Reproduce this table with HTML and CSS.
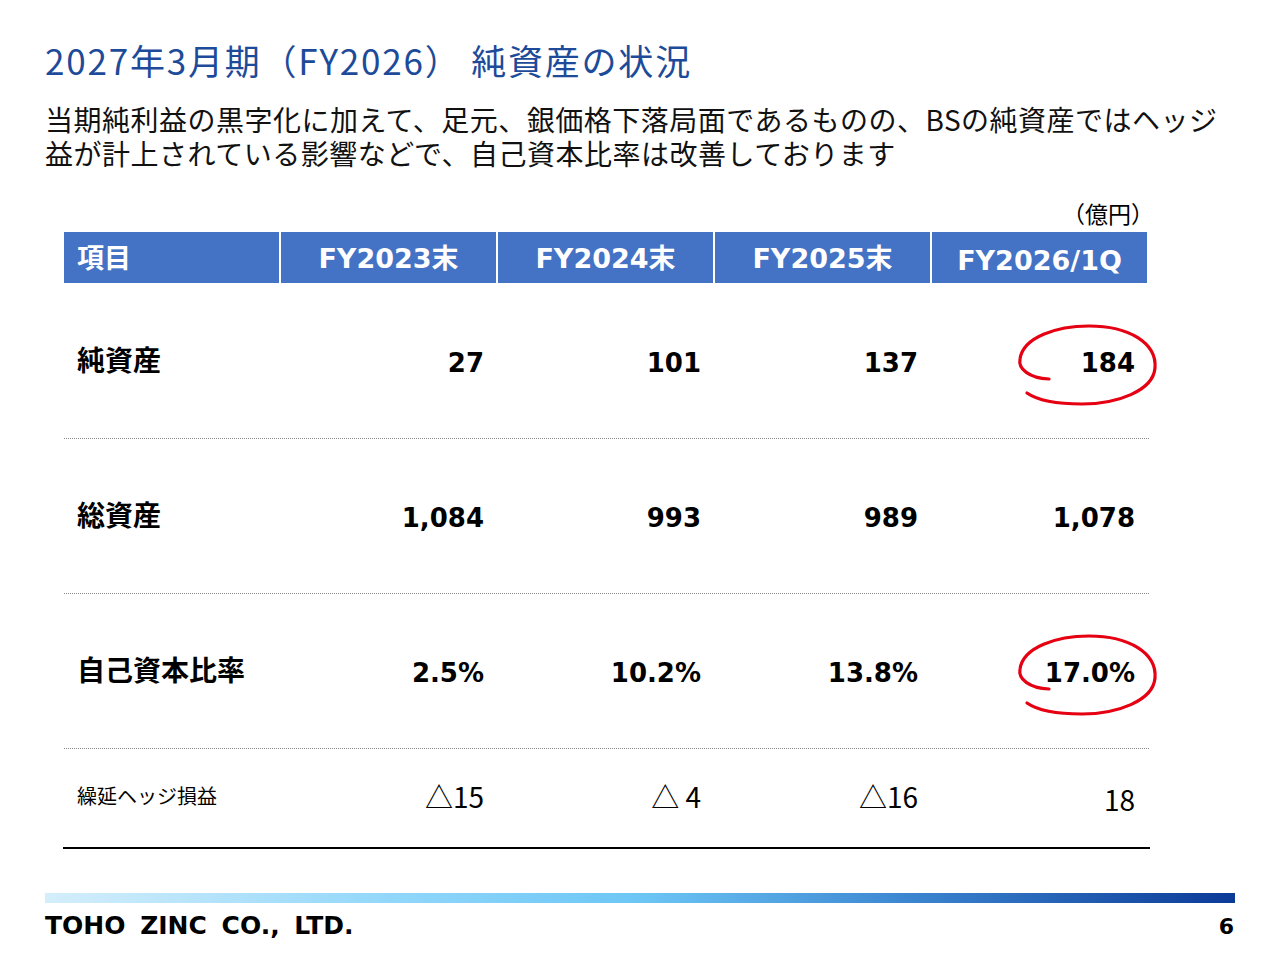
FILE: index.html
```html
<!DOCTYPE html>
<html lang="ja">
<head>
<meta charset="utf-8">
<title>純資産の状況</title>
<link rel="stylesheet" href="styles.css">
</head>
<body>
<div class="slide">
  <h1 class="title">2027年3月期（FY2026） 純資産の状況</h1>
  <div class="lead">
    <span class="line">当期純利益の黒字化に加えて、足元、銀価格下落局面であるものの、BSの純資産ではヘッジ</span>
    <span class="line">益が計上されている影響などで、自己資本比率は改善しております</span>
  </div>
  <div class="unit">（億円）</div>
  <div class="table">
    <div class="head">
      <div class="hcell hlabel">項目</div>
      <div class="hcell">FY2023末</div>
      <div class="hcell">FY2024末</div>
      <div class="hcell">FY2025末</div>
      <div class="hcell hlast">FY2026/1Q</div>
    </div>
    <div class="row big first dotted">
      <div class="label">純資産</div>
      <div class="num">27</div>
      <div class="num">101</div>
      <div class="num">137</div>
      <div class="num mark">184
        <svg class="circle" viewBox="0 0 150 90" width="150" height="90"><path d="M40,56 C20,55 9,46 11,36 C14,14 48,3 80,3 C120,3 148,20 146,45 C144,68 108,81 73,81 C48,81 28,77 18,70" fill="none" stroke="#e50012" stroke-width="3.2" stroke-linecap="round"/></svg>
      </div>
    </div>
    <div class="row big dotted">
      <div class="label">総資産</div>
      <div class="num">1,084</div>
      <div class="num">993</div>
      <div class="num">989</div>
      <div class="num">1,078</div>
    </div>
    <div class="row big dotted">
      <div class="label">自己資本比率</div>
      <div class="num">2.5%</div>
      <div class="num">10.2%</div>
      <div class="num">13.8%</div>
      <div class="num mark">17.0%
        <svg class="circle" viewBox="0 0 150 90" width="150" height="90"><path d="M40,56 C20,55 9,46 11,36 C14,14 48,3 80,3 C120,3 148,20 146,45 C144,68 108,81 73,81 C48,81 28,77 18,70" fill="none" stroke="#e50012" stroke-width="3.2" stroke-linecap="round"/></svg>
      </div>
    </div>
    <div class="row small">
      <div class="label">繰延ヘッジ損益</div>
      <div class="num">△15</div>
      <div class="num">△ 4</div>
      <div class="num">△16</div>
      <div class="num low">18</div>
    </div>
  </div>
  <div class="footer">
    <div class="bar"></div>
    <div class="foot-row">
      <span class="logo">TOHO ZINC CO., LTD.</span>
      <span class="page">6</span>
    </div>
  </div>
</div>
</body>
</html>
```

FILE: styles.css
```css
* { box-sizing: border-box; }
html, body { margin: 0; padding: 0; background: #fff; }
body {
  width: 1280px;
  height: 960px;
  overflow: hidden;
  font-family: "Noto Sans CJK JP", "Noto Sans", sans-serif;
  color: #000;
}
.slide {
  width: 1280px;
  height: 960px;
  display: flex;
  flex-direction: column;
  padding-top: 38px;
}
.title {
  margin: 0 0 0 45px;
  font-size: 35px;
  line-height: 44px;
  font-weight: 400;
  color: #1d4b99;
  letter-spacing: 1.8px;
  white-space: nowrap;
}
.lead {
  margin: 20px 0 0 45px;
  font-size: 28px;
  color: #111;
  white-space: nowrap;
  letter-spacing: 0.5px;
}
.line {
  display: block;
  height: 34px;
  line-height: 34px;
}
.unit {
  margin: 29px 0 0 0;
  width: 1154px;
  text-align: right;
  font-size: 23px;
  line-height: 28px;
}
.table {
  margin: 5px 0 0 64px;
  width: 1085px;
}
.head {
  display: grid;
  grid-template-columns: repeat(5, 215px);
  column-gap: 2px;
  height: 51px;
}
.hcell {
  background: #4472c4;
  color: #fff;
  font-family: "DejaVu Sans", "Noto Sans CJK JP", sans-serif;
  font-weight: 700;
  font-size: 27px;
  display: flex;
  align-items: center;
  justify-content: center;
  padding-bottom: 3px;
}
.hlabel {
  justify-content: flex-start;
  padding-left: 13px;
  font-family: "Noto Sans CJK JP", sans-serif;
  font-size: 27px;
}
.hlast { padding-top: 5px; padding-bottom: 0; }
.row {
  display: grid;
  grid-template-columns: repeat(5, 215px);
  column-gap: 2px;
  align-items: center;
}
.row.big { height: 155px; }
.row.big.first { height: 156px; }
.row.small { height: 100px; padding-bottom: 5px; }
.row.dotted { border-bottom: 1px dotted #8a8a8a; }
.row.small { border-bottom: 2px solid #000; width: 1087px; margin-left: -1px; padding-left: 1px; }
.label {
  padding-left: 13px;
  font-weight: 700;
  font-size: 28px;
}
.row.big .label { margin-top: -4px; }
.num {
  text-align: right;
  padding-right: 12px;
  font-family: "DejaVu Sans", "Noto Sans CJK JP", sans-serif;
  font-weight: 700;
  font-size: 26px;
}
.row.big .num { padding-top: 4px; }
.row.small .label {
  font-weight: 400;
  font-size: 20px;
}
.row.small .num {
  font-family: "Noto Sans CJK JP", sans-serif;
  font-weight: 400;
  font-size: 28px;
}
.row.small .num.low { padding-top: 7px; }
.mark { position: relative; }
.circle {
  position: absolute;
  right: -12px;
  top: 50%;
  margin-top: -38px;
  overflow: visible;
}
.footer {
  margin-top: auto;
  padding: 0 45px 19px 45px;
}
.bar {
  height: 10px;
  background: linear-gradient(to right, #d4eefb 0%, #8fd6fa 30%, #6cc6f5 50%, #3d87d2 72%, #0b3a97 100%);
}
.foot-row {
  display: flex;
  justify-content: space-between;
  align-items: center;
  margin-top: 8px;
}
.logo {
  font-family: "DejaVu Sans", sans-serif;
  font-weight: 700;
  font-size: 25px;
  word-spacing: 6px;
  line-height: 30px;
}
.page {
  font-family: "DejaVu Sans", sans-serif;
  font-weight: 700;
  font-size: 22px;
  margin-right: 1px;
}
```
